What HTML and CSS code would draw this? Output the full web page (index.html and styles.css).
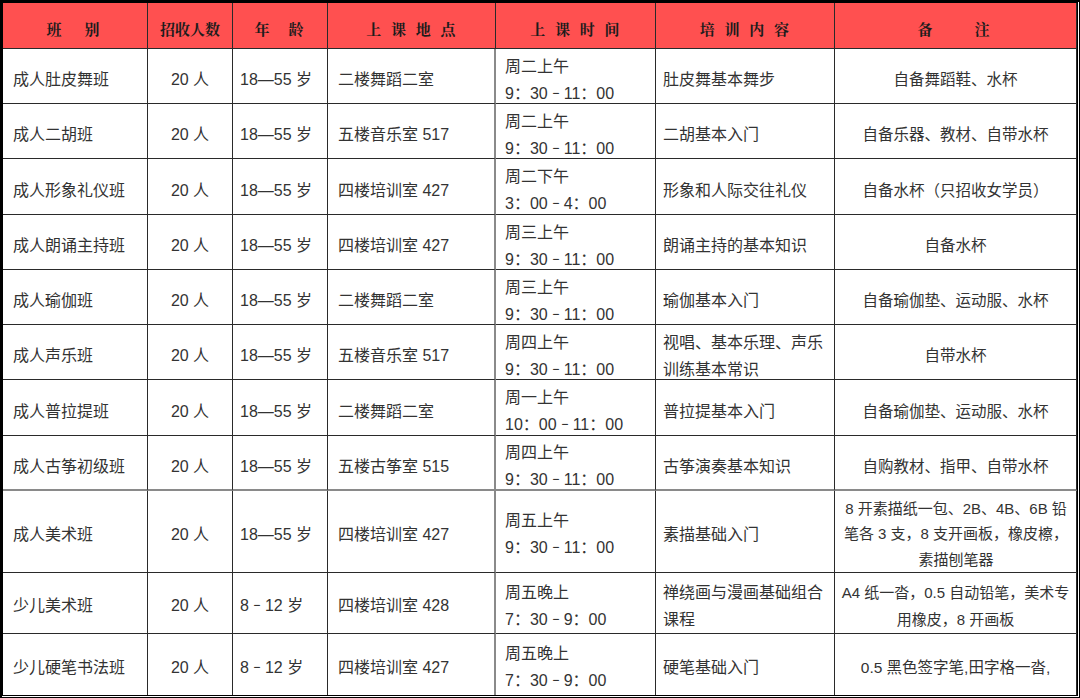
FILE: index.html
```html
<!DOCTYPE html>
<html lang="zh-CN">
<head>
<meta charset="utf-8">
<title>课程表</title>
<link rel="stylesheet" href="styles.css">
</head>
<body>
<div class="frame">
<table class="sched">
<thead>
<tr class="head">
<th><span class="sp4">班　别</span></th>
<th>招收人数</th>
<th><span class="sp2">年　龄</span></th>
<th class="sp1">上 课 地 点</th>
<th class="sp1">上 课 时 间</th>
<th class="sp1">培 训 内 容</th>
<th><span class="sp4">备　　注</span></th>
</tr>
</thead>
<tbody>
<tr>
<td class="name">成人肚皮舞班</td><td class="num">20 人</td><td class="age">18—55 岁</td><td class="loc">二楼舞蹈二室</td>
<td class="time"><span>周二上午</span><span>9：30<i class="dash">－</i>11：00</span></td><td class="cont">肚皮舞基本舞步</td><td class="note">自备舞蹈鞋、水杯</td>
</tr>
<tr>
<td class="name">成人二胡班</td><td class="num">20 人</td><td class="age">18—55 岁</td><td class="loc">五楼音乐室 517</td>
<td class="time"><span>周二上午</span><span>9：30<i class="dash">－</i>11：00</span></td><td class="cont">二胡基本入门</td><td class="note">自备乐器、教材、自带水杯</td>
</tr>
<tr>
<td class="name">成人形象礼仪班</td><td class="num">20 人</td><td class="age">18—55 岁</td><td class="loc">四楼培训室 427</td>
<td class="time"><span>周二下午</span><span>3：00<i class="dash">－</i>4：00</span></td><td class="cont">形象和人际交往礼仪</td><td class="note">自备水杯（只招收女学员）</td>
</tr>
<tr>
<td class="name">成人朗诵主持班</td><td class="num">20 人</td><td class="age">18—55 岁</td><td class="loc">四楼培训室 427</td>
<td class="time"><span>周三上午</span><span>9：30<i class="dash">－</i>11：00</span></td><td class="cont">朗诵主持的基本知识</td><td class="note">自备水杯</td>
</tr>
<tr>
<td class="name">成人瑜伽班</td><td class="num">20 人</td><td class="age">18—55 岁</td><td class="loc">二楼舞蹈二室</td>
<td class="time"><span>周三上午</span><span>9：30<i class="dash">－</i>11：00</span></td><td class="cont">瑜伽基本入门</td><td class="note">自备瑜伽垫、运动服、水杯</td>
</tr>
<tr>
<td class="name">成人声乐班</td><td class="num">20 人</td><td class="age">18—55 岁</td><td class="loc">五楼音乐室 517</td>
<td class="time"><span>周四上午</span><span>9：30<i class="dash">－</i>11：00</span></td><td class="cont">视唱、基本乐理、声乐训练基本常识</td><td class="note">自带水杯</td>
</tr>
<tr>
<td class="name">成人普拉提班</td><td class="num">20 人</td><td class="age">18—55 岁</td><td class="loc">二楼舞蹈二室</td>
<td class="time"><span>周一上午</span><span>10：00<i class="dash">－</i>11：00</span></td><td class="cont">普拉提基本入门</td><td class="note">自备瑜伽垫、运动服、水杯</td>
</tr>
<tr class="sep">
<td class="name">成人古筝初级班</td><td class="num">20 人</td><td class="age">18—55 岁</td><td class="loc">五楼古筝室 515</td>
<td class="time"><span>周四上午</span><span>9：30<i class="dash">－</i>11：00</span></td><td class="cont">古筝演奏基本知识</td><td class="note">自购教材、指甲、自带水杯</td>
</tr>
<tr class="tall">
<td class="name">成人美术班</td><td class="num">20 人</td><td class="age">18—55 岁</td><td class="loc">四楼培训室 427</td>
<td class="time"><span>周五上午</span><span>9：30<i class="dash">－</i>11：00</span></td><td class="cont">素描基础入门</td><td class="note small narrow">8 开素描纸一包、2B、4B、6B 铅笔各 3 支，8 支开画板，橡皮檫，素描刨笔器</td>
</tr>
<tr class="low">
<td class="name">少儿美术班</td><td class="num">20 人</td><td class="age"><span>8<i class="dash">－</i>12 岁</span></td><td class="loc">四楼培训室 428</td>
<td class="time"><span>周五晚上</span><span>7：30<i class="dash">－</i>9：00</span></td><td class="cont">禅绕画与漫画基础组合课程</td><td class="note small">A4 纸一沓，0.5 自动铅笔，美术专用橡皮，8 开画板</td>
</tr>
<tr class="low last">
<td class="name">少儿硬笔书法班</td><td class="num">20 人</td><td class="age"><span>8<i class="dash">－</i>12 岁</span></td><td class="loc">四楼培训室 427</td>
<td class="time"><span>周五晚上</span><span>7：30<i class="dash">－</i>9：00</span></td><td class="cont">硬笔基础入门</td><td class="note">0.5 黑色签字笔,田字格一沓,</td>
</tr>
</tbody>
</table>
</div>
</body>
</html>
```
FILE: styles.css
```css
html, body {
  margin: 0;
  padding: 0;
  background: #ffffff;
}
.frame {
  width: 1080px;
  height: 698px;
  box-sizing: border-box;
  border-top: 3px solid #000;
  border-left: 3px solid #000;
  border-right: 3px double #000;
  border-bottom: 3px double #000;
  overflow: hidden;
  background: #fff;
}
.sched {
  display: grid;
  grid-template-columns: 145px 85px 95px 168px 160px 179px 242px;
  grid-template-rows: 46px 55px 55px 56px 55px 55px 55px 56px 55px 82px 61px 61px;
  width: 1074px;
  border-spacing: 0;
  font-family: "Liberation Sans", "Noto Sans CJK SC", sans-serif;
  font-size: 16px;
  color: #333;
}
.sched thead, .sched tbody, .sched tr {
  display: contents;
}
.sched th, .sched td {
  display: flex;
  flex-direction: column;
  justify-content: center;
  box-sizing: border-box;
  min-width: 0;
  margin: 0;
  padding: 7px 0 0 0;
  border: 0;
  border-right: 1px solid #2a2a2a;
  border-bottom: 1px solid #2a2a2a;
}

.head th {
  background: #ff5050;
  font-family: "Noto Serif CJK SC", "Noto Sans CJK SC", serif;
  font-weight: 700;
  font-size: 15px;
  color: #1c1c1c;
  text-align: center;
  white-space: nowrap;
  padding-top: 6px;
}
.sp1 { letter-spacing: 1px; word-spacing: 4px; }
.sp2 { letter-spacing: 2px; }
.sp4 { letter-spacing: 4px; }

.sched td {
  line-height: 27px;
}
.name { padding-left: 10px !important; text-align: left; }
.num { text-align: center; }
.age { padding-left: 7px !important; text-align: left; white-space: nowrap; }
.loc {
  padding-left: 10px !important;
  text-align: left;
  border-right: 2px solid #8a8a8a !important;
}
.time {
  padding-left: 9px !important;
  text-align: left;
  white-space: nowrap;
}
.cont { padding-left: 7px !important; padding-right: 4px !important; text-align: left; }
.note {
  text-align: center;
  padding-left: 3px !important;
  padding-right: 3px !important;
  font-size: 15.5px;
}
.note.small {
  font-size: 15px;
  padding-left: 1px !important;
  padding-right: 1px !important;
}
.note.narrow {
  padding-left: 8px !important;
  padding-right: 7px !important;
}
.dash {
  display: inline-block;
  font-style: normal;
  transform: scaleX(0.5);
}

.sep td { border-bottom: 2px solid #8a8a8a; }
.tall td { padding-top: 5px; }
.tall .note { line-height: 25.5px; }
.low td { padding-top: 5px; }
.last td { border-bottom: none; }
```
